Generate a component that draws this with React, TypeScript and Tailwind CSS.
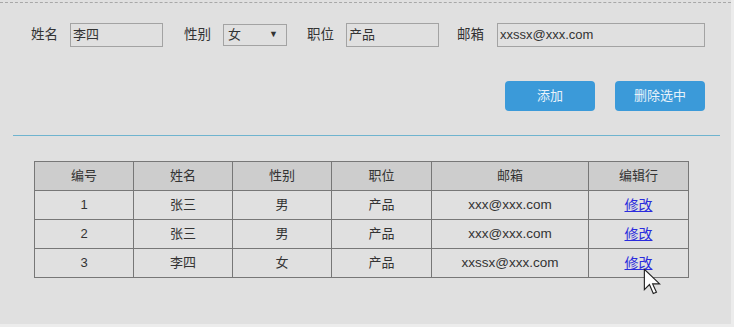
const rows = [
  { id: 1, name: '张三', gender: '男', job: '产品', email: 'xxx@xxx.com' },
  { id: 2, name: '张三', gender: '男', job: '产品', email: 'xxx@xxx.com' },
  { id: 3, name: '李四', gender: '女', job: '产品', email: 'xxssx@xxx.com' },
];

const font = { fontFamily: '"Liberation Sans", "Noto Sans CJK SC", sans-serif' };

function Label({ text, className = '' }: { text: string; className?: string }) {
  return <span className={`text-[13.5px] leading-none text-[#333] ${className}`}>{text}</span>;
}

function Field({ value, width }: { value: string; width: string }) {
  return (
    <div
      className={`${width} h-[24px] border border-[#a3a3a3] flex items-center pl-[2px] text-[13px] text-[#333]`}
    >
      {value}
    </div>
  );
}

export default function App() {
  return (
    <div className="min-h-screen w-full bg-[#ececec]" style={font}>
      <div className="w-[731px] h-[324px] bg-[#e0e0e0] flex flex-col">
        {/* top rule */}
        <div className="mt-[2px] border-t border-dashed border-[#a8a8a8]" />

        {/* form */}
        <div className="mt-[20px] flex items-center h-[24px] pl-[31px]">
          <Label text="姓名" />
          <div className="ml-[12px]">
            <Field value="李四" width="w-[93px]" />
          </div>
          <Label text="性别" className="ml-[21px]" />
          <div className="ml-[12px] w-[64px] h-[22px] border border-[#a3a3a3] flex items-center justify-between pl-[4px] pr-[8px] text-[13px] text-[#333]">
            <span>女</span>
            <span className="text-[9px] text-[#333]">▼</span>
          </div>
          <Label text="职位" className="ml-[20px]" />
          <div className="ml-[12px]">
            <Field value="产品" width="w-[93px]" />
          </div>
          <Label text="邮箱" className="ml-[18px]" />
          <div className="ml-[13px]">
            <Field value="xxssx@xxx.com" width="w-[208px]" />
          </div>
        </div>

        {/* actions */}
        <div className="mt-[34px] flex justify-end gap-[20px] pr-[26px]">
          <button className="w-[90px] h-[30px] rounded-[4px] bg-[#3b9ad9] text-[13px] text-[#e8f2fa]">
            添加
          </button>
          <button className="w-[90px] h-[30px] rounded-[4px] bg-[#3b9ad9] text-[13px] text-[#e8f2fa]">
            删除选中
          </button>
        </div>

        {/* separator */}
        <div className="mt-[24px] ml-[13px] w-[707px] h-px bg-[#6fb4cf]" />

        {/* table */}
        <table className="mt-[25px] ml-[34px] w-[654px] border-collapse text-[13px] text-[#333] table-fixed">
          <colgroup>
            <col className="w-[99px]" />
            <col className="w-[99px]" />
            <col className="w-[99px]" />
            <col className="w-[100px]" />
            <col className="w-[157px]" />
            <col className="w-[100px]" />
          </colgroup>
          <thead>
            <tr className="h-[29px] bg-[#cdcdcd]">
              {['编号', '姓名', '性别', '职位', '邮箱', '编辑行'].map((h) => (
                <th key={h} className="border border-[#777] font-normal text-center p-0">
                  {h}
                </th>
              ))}
            </tr>
          </thead>
          <tbody>
            {rows.map((r) => (
              <tr key={r.id} className="h-[29px]">
                <td className="border border-[#777] text-center p-0">{r.id}</td>
                <td className="border border-[#777] text-center p-0">{r.name}</td>
                <td className="border border-[#777] text-center p-0">{r.gender}</td>
                <td className="border border-[#777] text-center p-0">{r.job}</td>
                <td className="border border-[#777] text-center p-0 text-[13.5px]">{r.email}</td>
                <td className="border border-[#777] text-center p-0 relative">
                  <a className="text-[14px] text-[#2b2bdd] underline cursor-pointer">修改</a>
                  {r.id === 3 && (
                    <svg
                      className="absolute left-[54px] top-[19px]"
                      width="18"
                      height="28"
                      viewBox="0 0 14 22"
                    >
                      <path
                        d="M1 1 L1 17 L5 13 L8 20 L10.5 19 L7.5 12.5 L13 12.5 Z"
                        fill="#fff"
                        stroke="#222"
                        strokeWidth="0.9"
                        strokeLinejoin="miter"
                      />
                    </svg>
                  )}
                </td>
              </tr>
            ))}
          </tbody>
        </table>
      </div>
    </div>
  );
}
